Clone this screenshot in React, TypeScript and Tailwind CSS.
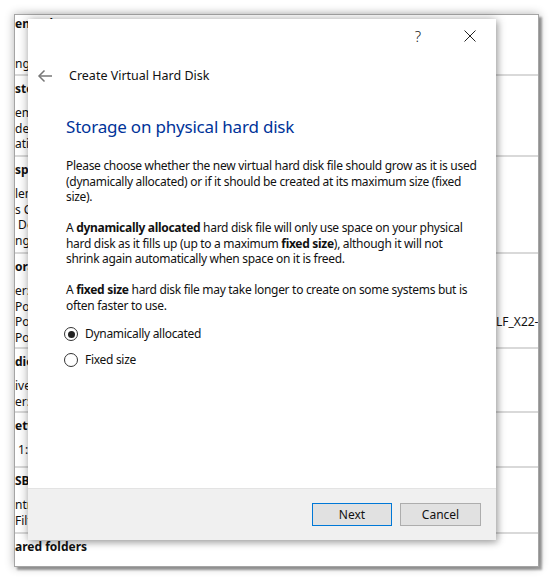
import type { FC, ReactNode } from 'react';

interface SectionProps {
  title: string;
  lines: string[];
  height: string;
  first?: boolean;
  right?: Record<number, string>;
}

// background details pane, mostly hidden behind the dialog
const Section: FC<SectionProps> = ({ title, lines, height, first, right }) => (
  <div className={`${height} shrink-0 ${first ? 'pt-[1px]' : 'border-t-2 border-[#d9d9d9] pt-[5px]'}`}>
    <div className="h-[16px] leading-[16px] font-bold whitespace-pre">{title}</div>
    <div className="mt-[8px] flex flex-col">
      {lines.map((line, i) => (
        <div key={i} className="flex h-[15.5px] leading-[15.5px] whitespace-pre">
          <span className="w-[481px] shrink-0">{line}</span>
          {right?.[i] && <span className="whitespace-nowrap">{right[i]}</span>}
        </div>
      ))}
    </div>
  </div>
);

const sections: SectionProps[] = [
  { title: 'eneral', lines: ['', 'ng System:'], height: 'h-[59px]', first: true },
  { title: 'stem', lines: ['emory:', 'der:', 'ation:'], height: 'h-[81px]' },
  { title: 'splay', lines: ['lemory:', 's Controller:', ' Desktop Server:', 'ng:'], height: 'h-[97px]' },
  {
    title: 'orage',
    lines: ['er: SATA', 'Port 0:', 'Port 1:', 'Port 2:'],
    height: 'h-[95px]',
    right: { 2: 'LF_X22-1' },
  },
  { title: 'dio', lines: ['iver:', 'er:'], height: 'h-[64px]' },
  { title: 'etwork', lines: [' 1:'], height: 'h-[55px]' },
  { title: 'SB', lines: ['ntroller:', 'Filters:'], height: 'h-[66px]' },
  { title: 'ared folders', lines: [], height: 'h-[40px]' },
];

const Para: FC<{ children: ReactNode; className?: string }> = ({ children, className }) => (
  <p className={`w-[420px] text-[12px] leading-[15.5px] tracking-[-0.3px] whitespace-nowrap text-[#111] ${className ?? ''}`}>
    {children}
  </p>
);

const Radio: FC<{ label: string; checked?: boolean; className?: string }> = ({ label, checked, className }) => (
  <label className={`flex h-[16px] items-center ${className ?? ''}`}>
    <span className="ml-[-2px] flex h-[14px] w-[14px] items-center justify-center rounded-full border border-[#333] bg-white">
      {checked && <span className="h-[7px] w-[7px] rounded-full bg-[#222]" />}
    </span>
    <span className="ml-[7px] text-[12px] tracking-[-0.3px] text-[#111]">{label}</span>
  </label>
);

const BackArrow: FC = () => (
  <svg width="16" height="14" viewBox="0 0 16 14" fill="none" stroke="#777" strokeWidth="1.5">
    <path d="M15 7H2" />
    <path d="M7.5 1.5L2 7l5.5 5.5" />
  </svg>
);

const Dialog: FC = () => (
  <div className="absolute left-[28px] top-[19px] flex h-[521px] w-[468px] flex-col bg-white shadow-[0_0_10px_rgba(0,0,0,0.3),2px_3px_6px_rgba(0,0,0,0.2)]">
    <div className="flex h-[34px] shrink-0 justify-end pr-[3px]">
      <div className="mr-[6px] flex w-[46px] items-center justify-center text-[15px] font-light text-[#222]">?</div>
      <div className="flex w-[46px] items-center justify-center">
        <svg width="12" height="12" viewBox="0 0 12 12" stroke="#222" strokeWidth="1">
          <path d="M0.5 0.5l11 11M11.5 0.5l-11 11" />
        </svg>
      </div>
    </div>
    <div className="flex h-[45px] shrink-0 items-center pl-[9px] pt-[1px]">
      <BackArrow />
      <span className="ml-[16px] text-[12.5px] text-[#111]">Create Virtual Hard Disk</span>
    </div>
    <div className="flex-1 pl-[38px]">
      <h1 className="mt-[17px] text-[17px] leading-[24px] tracking-[-0.2px] text-[#003399]">Storage on physical hard disk</h1>
      <Para className="mt-[19px]">
        Please choose whether the new virtual hard disk file should grow as it is used
        <br />
        (dynamically allocated) or if it should be created at its maximum size (fixed
        <br />
        size).
      </Para>
      <Para className="mt-[15.5px]">
        A <b>dynamically allocated</b> hard disk file will only use space on your physical
        <br />
        hard disk as it fills up (up to a maximum <b>fixed size</b>), although it will not
        <br />
        shrink again automatically when space on it is freed.
      </Para>
      <Para className="mt-[15.5px]">
        A <b>fixed size</b> hard disk file may take longer to create on some systems but is
        <br />
        often faster to use.
      </Para>
      <Radio className="mt-[13px]" label="Dynamically allocated" checked />
      <Radio className="mt-[10px]" label="Fixed size" />
    </div>
    <div className="flex h-[52px] shrink-0 items-center justify-end gap-[8px] border-t border-[#e3e3e3] bg-[#f0f0f0] pr-[15px]">
      <button className="h-[23px] w-[80px] border border-[#0078d7] bg-[#e1e1e1] text-[12px] text-[#111]">Next</button>
      <button className="h-[23px] w-[81px] border border-[#adadad] bg-[#e1e1e1] text-[12px] text-[#111]">Cancel</button>
    </div>
  </div>
);

export default function App() {
  return (
    <div className="relative h-[582px] w-[553px] overflow-hidden bg-white font-['Noto_Sans',sans-serif]">
      <div className="ml-[14px] mt-[14px] flex h-[553px] w-[525px] flex-col overflow-hidden border border-[#a5a5a5] bg-white text-[12px] text-[#111] shadow-[3px_3px_2px_rgba(0,0,0,0.35),0_0_9px_rgba(0,0,0,0.3)]">
        {sections.map((s) => (
          <Section key={s.title} {...s} />
        ))}
      </div>
      <Dialog />
    </div>
  );
}
